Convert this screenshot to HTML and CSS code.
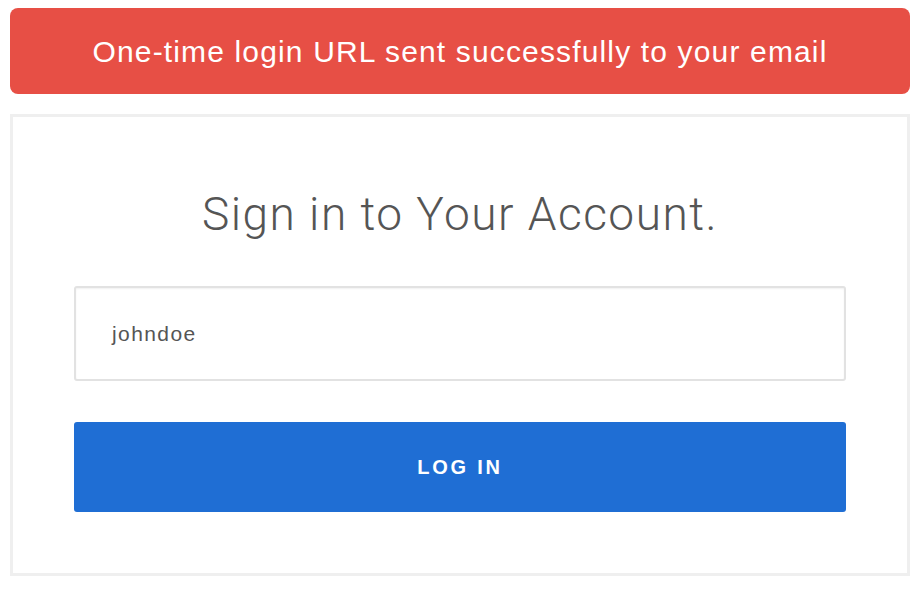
FILE: index.html
```html
<!DOCTYPE html>
<html>
<head>
<meta charset="utf-8">
<link rel="stylesheet" href="styles.css">
</head>
<body>
<div class="page">
  <div class="alert">One-time login URL sent successfully to your email</div>
  <div class="card">
    <h1 class="title">Sign in to Your Account.</h1>
    <div class="field">johndoe</div>
    <button class="btn">LOG IN</button>
  </div>
</div>
</body>
</html>
```

FILE: styles.css
```css
html, body {
  margin: 0;
  padding: 0;
  background: #ffffff;
}
body {
  font-family: "Liberation Sans", Arial, sans-serif;
}
.page {
  width: 900px;
  padding: 8px 0 0 10px;
}
.alert {
  height: 86px;
  background: #e74f45;
  border-radius: 8px;
  color: #ffffff;
  font-size: 30px;
  letter-spacing: 1.15px;
  display: flex;
  align-items: center;
  justify-content: center;
  padding-top: 2px;
  box-sizing: border-box;
}
.card {
  margin-top: 20px;
  border: 3px solid #efefef;
  padding: 72px 61px 61px;
  display: flex;
  flex-direction: column;
}
.title {
  margin: 0 0 46px;
  font-family: "Roboto", sans-serif;
  font-weight: 300;
  font-size: 46px;
  letter-spacing: 1.5px;
  line-height: 51px;
  color: #555555;
  text-align: center;
}
.field {
  height: 91px;
  border: 2px solid #e2e2e2;
  border-radius: 3px;
  box-shadow: inset 0 1px 2px rgba(0,0,0,0.06);
  display: flex;
  align-items: center;
  padding-left: 36px;
  font-size: 21px;
  letter-spacing: 1.4px;
  color: #555555;
}
.btn {
  margin-top: 41px;
  height: 90px;
  border: none;
  border-radius: 3px;
  background: #1f6ed4;
  color: #ffffff;
  font-family: "Liberation Sans", Arial, sans-serif;
  font-weight: bold;
  font-size: 20px;
  letter-spacing: 2.8px;
  padding: 0;
}
```
